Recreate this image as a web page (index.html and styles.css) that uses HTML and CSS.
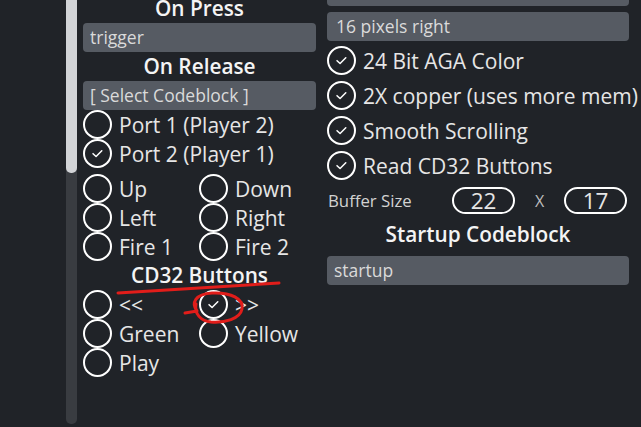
FILE: index.html
```html
<!DOCTYPE html>
<html>
<head>
<meta charset="utf-8">
<link rel="stylesheet" href="styles.css">
</head>
<body>
<div class="page">
  <div class="gutter"></div>
  <div class="scrollbar"><div class="thumb"></div></div>
  <div class="left">
    <h2 class="heading">On Press</h2>
    <div class="field">trigger</div>
    <h2 class="heading">On Release</h2>
    <div class="field">[ Select Codeblock ]</div>
    <div class="opt"><span class="radio"></span>Port 1 (Player 2)</div>
    <div class="opt"><span class="radio"><svg viewBox="0 0 28 28"><path d="M9 14.2 L12.4 17.4 L18.8 11"/></svg></span>Port 2 (Player 1)</div>
    <div class="grid grid-dirs">
      <div class="opt"><span class="radio"></span>Up</div>
      <div class="opt"><span class="radio"></span>Down</div>
      <div class="opt"><span class="radio"></span>Left</div>
      <div class="opt"><span class="radio"></span>Right</div>
      <div class="opt"><span class="radio"></span>Fire 1</div>
      <div class="opt"><span class="radio"></span>Fire 2</div>
    </div>
    <h2 class="heading">CD32 Buttons</h2>
    <div class="grid">
      <div class="opt"><span class="radio"></span>&lt;&lt;</div>
      <div class="opt"><span class="radio"><svg viewBox="0 0 28 28"><path d="M9 14.2 L12.4 17.4 L18.8 11"/></svg></span>&gt;&gt;</div>
      <div class="opt"><span class="radio"></span>Green</div>
      <div class="opt"><span class="radio"></span>Yellow</div>
      <div class="opt"><span class="radio"></span>Play</div>
    </div>
  </div>
  <div class="right">
    <div class="field field-cut"></div>
    <div class="field field-pad">16 pixels right</div>
    <div class="checks">
      <div class="opt opt-r"><span class="radio"><svg viewBox="0 0 28 28"><path d="M9 14.2 L12.4 17.4 L18.8 11"/></svg></span>24 Bit AGA Color</div>
      <div class="opt opt-r"><span class="radio"><svg viewBox="0 0 28 28"><path d="M9 14.2 L12.4 17.4 L18.8 11"/></svg></span>2X copper (uses more mem)</div>
      <div class="opt opt-r"><span class="radio"><svg viewBox="0 0 28 28"><path d="M9 14.2 L12.4 17.4 L18.8 11"/></svg></span>Smooth Scrolling</div>
      <div class="opt opt-r"><span class="radio"><svg viewBox="0 0 28 28"><path d="M9 14.2 L12.4 17.4 L18.8 11"/></svg></span>Read CD32 Buttons</div>
    </div>
    <div class="buffer">
      <span class="buf-label">Buffer Size</span>
      <span class="oval">22</span>
      <span class="times">X</span>
      <span class="oval">17</span>
    </div>
    <h2 class="heading heading-r">Startup Codeblock</h2>
    <div class="field field-startup">startup</div>
  </div>
</div>
<svg class="annot" width="641" height="427" viewBox="0 0 641 427">
  <path d="M118 293 C 150 291, 205 288, 279 283"/>
  <path d="M185 313 L197 311 C 191 303, 195 294, 212 293 C 231 292, 244 299, 242 309 C 240 319, 225 323, 211 322 C 201 321, 194 314, 196 304"/>
</svg>
</body>
</html>
```

FILE: styles.css
```css
html, body {
  margin: 0;
  padding: 0;
  height: 100%;
  overflow: hidden;
}
body {
  background: #202328;
  font-family: "Open Sans", "Noto Sans", sans-serif;
  color: #e3e3e3;
  position: relative;
}
.page {
  display: flex;
  align-items: flex-start;
}
.gutter {
  width: 66px;
  flex: none;
}
.scrollbar {
  width: 11px;
  height: 424px;
  flex: none;
  background: #393c41;
  border-radius: 0 0 5px 5px;
  display: flex;
  flex-direction: column;
}
.thumb {
  height: 173px;
  background: #d2d4d7;
  border-radius: 0 0 5px 5px;
}
.left {
  width: 233px;
  margin-left: 6px;
  margin-top: -6px;
  flex: none;
}
.right {
  width: 302px;
  margin-left: 11px;
  margin-top: -23px;
  flex: none;
}
.heading {
  margin: 0;
  font-size: 20.8px;
  font-weight: 600;
  line-height: 29px;
  text-align: center;
  color: #f4f4f4;
}
.field {
  height: 29px;
  box-sizing: border-box;
  border-radius: 4px;
  background: #565b63;
  padding: 0 7px;
  font-size: 17.5px;
  line-height: 28px;
  color: #dadada;
  white-space: nowrap;
}
.field-pad {
  margin-top: 6px;
  padding-left: 9px;
}
.opt {
  height: 29px;
  display: flex;
  align-items: center;
  gap: 7px;
  font-size: 21px;
  color: #e6e6e6;
  white-space: nowrap;
}
.radio {
  width: 29px;
  height: 29px;
  box-sizing: border-box;
  border: 2px solid #ffffff;
  border-radius: 50%;
  flex: none;
  display: flex;
}
.radio svg {
  width: 25px;
  height: 25px;
}
.radio path {
  fill: none;
  stroke: #ffffff;
  stroke-width: 1.7;
  stroke-linecap: round;
  stroke-linejoin: round;
}
.grid {
  display: grid;
  grid-template-columns: 116px 1fr;
}
.grid-dirs {
  margin-top: 6px;
}
.checks {
  margin-top: 2px;
}
.opt-r {
  height: 35px;
}
.buffer {
  margin-top: 4px;
  height: 27px;
  display: flex;
  align-items: center;
}
.buf-label {
  width: 125px;
  padding-left: 1px;
  box-sizing: border-box;
  font-size: 16.8px;
  color: #d2d2d2;
}
.oval {
  width: 63px;
  height: 27px;
  box-sizing: border-box;
  border: 2px solid #ffffff;
  border-radius: 14px;
  text-align: center;
  font-size: 22.5px;
  line-height: 23px;
  color: #e6e6e6;
}
.times {
  width: 49px;
  text-align: center;
  font-size: 16px;
  color: #bdbdbd;
}
.heading-r {
  margin-top: 6px;
}
.field-startup {
  margin-top: 7px;
}
.annot {
  position: absolute;
  left: 0;
  top: 0;
  pointer-events: none;
}
.annot path {
  fill: none;
  stroke: #e11d1a;
  stroke-width: 3;
  stroke-linecap: round;
  stroke-linejoin: round;
}
```
